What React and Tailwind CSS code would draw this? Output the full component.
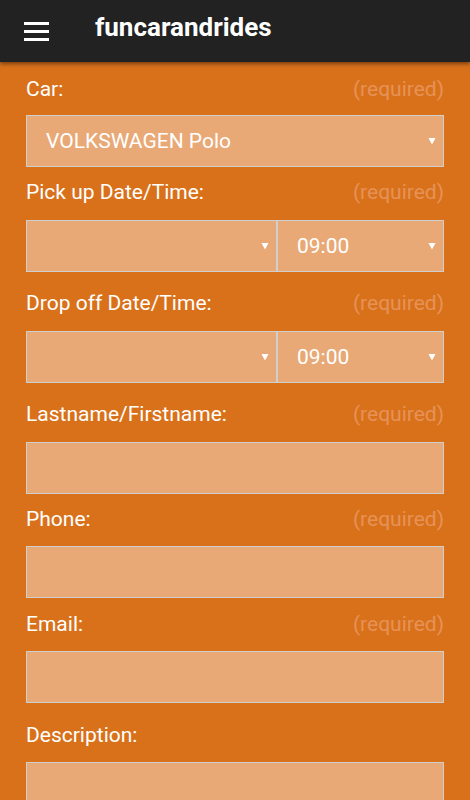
export default function App() {
  const Arrow = () => (
    <svg width="8" height="8" viewBox="0 0 8 8" className="absolute top-1/2 -translate-y-1/2 right-[7px]">
      <polygon points="0.5,1 7.5,1 4,7.5" fill="#ffffff" />
    </svg>
  );
  const Label = ({ text, req = true, className = "" }) => (
    <div className={"flex justify-between items-center h-[24px] text-[21px] leading-[24px] " + className}>
      <span className="text-white">{text}</span>
      {req && <span className="text-[#e69257]">(required)</span>}
    </div>
  );
  const box = "relative h-[52px] bg-[#e8a977] border border-[#cfcfcf]";
  return (
    <div className="w-[470px] h-[800px] overflow-hidden bg-[#d9711b]" style={{ fontFamily: "Roboto, 'Noto Sans', sans-serif" }}>
      <header className="relative z-10 h-[62px] bg-[#222222] flex items-center shadow-[0_2px_4px_rgba(0,0,0,0.45)]">
        <div className="ml-[24px] w-[25px] flex flex-col gap-[5px]">
          <div className="h-[3px] bg-white" />
          <div className="h-[3px] bg-white" />
          <div className="h-[3px] bg-white" />
        </div>
        <div className="ml-[46px] text-white font-bold text-[26px] leading-none -mt-[9px]">funcarandrides</div>
      </header>
      <main className="px-[26px]">
        <Label text="Car:" className="mt-[15px]" />
        <div className={box + " mt-[14px] flex items-center pl-[19px] pt-[2px]"}>
          <span className="text-white text-[21px]">VOLKSWAGEN Polo</span>
          <Arrow />
        </div>

        <Label text="Pick up Date/Time:" className="mt-[13px]" />
        <div className="mt-[16px] flex">
          <div className={box + " w-[251px]"}><Arrow /></div>
          <div className={box + " flex-1 flex items-center pl-[19px] pt-[2px]"}>
            <span className="text-white text-[21px]">09:00</span>
            <Arrow />
          </div>
        </div>

        <Label text="Drop off Date/Time:" className="mt-[19px]" />
        <div className="mt-[16px] flex">
          <div className={box + " w-[251px]"}><Arrow /></div>
          <div className={box + " flex-1 flex items-center pl-[19px] pt-[2px]"}>
            <span className="text-white text-[21px]">09:00</span>
            <Arrow />
          </div>
        </div>

        <Label text="Lastname/Firstname:" className="mt-[19px]" />
        <div className={box + " mt-[16px]"} />

        <Label text="Phone:" className="mt-[13px]" />
        <div className={box + " mt-[15px]"} />

        <Label text="Email:" className="mt-[14px]" />
        <div className={box + " mt-[15px]"} />

        <Label text="Description:" req={false} className="mt-[20px]" />
        <div className={box + " mt-[15px] h-[80px]"} />
      </main>
    </div>
  );
}
